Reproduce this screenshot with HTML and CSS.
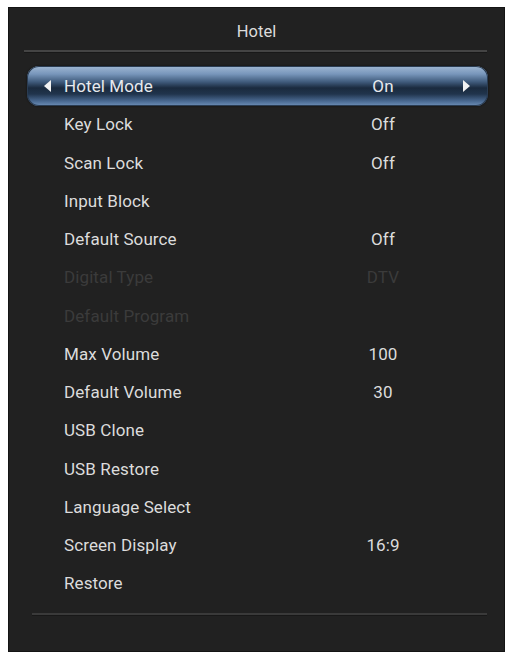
FILE: index.html
```html
<!DOCTYPE html>
<html lang="en">
<head>
  <meta charset="UTF-8">
  <meta name="viewport" content="width=device-width, initial-scale=1.0">
  <title>Hotel</title>
  <link rel="stylesheet" href="styles.css">
</head>
<body>
  <div class="panel">
    <div class="header">
      <div class="title">Hotel</div>
    </div>

    <div class="menu">
      <div class="menu-row selected">
        <span class="arrow arrow-left"></span>
        <span class="label">Hotel Mode</span>
        <span class="value">On</span>
        <span class="arrow arrow-right"></span>
      </div>
      <div class="menu-row">
        <span class="arrow"></span>
        <span class="label">Key Lock</span>
        <span class="value">Off</span>
      </div>
      <div class="menu-row">
        <span class="arrow"></span>
        <span class="label">Scan Lock</span>
        <span class="value">Off</span>
      </div>
      <div class="menu-row">
        <span class="arrow"></span>
        <span class="label">Input Block</span>
        <span class="value"></span>
      </div>
      <div class="menu-row">
        <span class="arrow"></span>
        <span class="label">Default Source</span>
        <span class="value">Off</span>
      </div>
      <div class="menu-row disabled">
        <span class="arrow"></span>
        <span class="label">Digital Type</span>
        <span class="value">DTV</span>
      </div>
      <div class="menu-row disabled">
        <span class="arrow"></span>
        <span class="label">Default Program</span>
        <span class="value"></span>
      </div>
      <div class="menu-row">
        <span class="arrow"></span>
        <span class="label">Max Volume</span>
        <span class="value">100</span>
      </div>
      <div class="menu-row">
        <span class="arrow"></span>
        <span class="label">Default Volume</span>
        <span class="value">30</span>
      </div>
      <div class="menu-row">
        <span class="arrow"></span>
        <span class="label">USB Clone</span>
        <span class="value"></span>
      </div>
      <div class="menu-row">
        <span class="arrow"></span>
        <span class="label">USB Restore</span>
        <span class="value"></span>
      </div>
      <div class="menu-row">
        <span class="arrow"></span>
        <span class="label">Language Select</span>
        <span class="value"></span>
      </div>
      <div class="menu-row">
        <span class="arrow"></span>
        <span class="label">Screen Display</span>
        <span class="value">16:9</span>
      </div>
      <div class="menu-row">
        <span class="arrow"></span>
        <span class="label">Restore</span>
        <span class="value"></span>
      </div>
    </div>

    <div class="footer-line"></div>
  </div>
</body>
</html>
```

FILE: styles.css
```css
* {
  margin: 0;
  padding: 0;
  box-sizing: border-box;
}

body {
  background: #fff;
  font-family: Roboto, 'Liberation Sans', sans-serif;
  color: #dcdcdc;
}

.panel {
  width: 497px;
  height: 645px;
  margin: 7px 0 0 8px;
  background: #212121;
  border: 1px solid #141414;
  display: flex;
  flex-direction: column;
}

.header {
  height: 44px;
  margin: 0 17px 0 15px;
  display: flex;
  align-items: center;
  justify-content: center;
  border-bottom: 2px solid #444;
  box-shadow: 0 1px 0 #181818;
}

.title {
  font-size: 16.5px;
  padding-top: 5px;
  padding-left: 2px;
}

.menu {
  margin: 15px 16px 0 18px;
}

.menu-row {
  height: 38.25px;
  display: grid;
  grid-template-columns: 20px 279px 80px 47px;
  align-items: center;
  padding: 0 18px 0 17px;
  font-size: 17px;
  letter-spacing: 0.1px;
}

.menu-row.selected {
  height: 40px;
  margin: -1px 0 -0.75px;
  border-radius: 12px;
  background: linear-gradient(to bottom,
    #a0b8d3 0%,
    #7896bb 20%,
    #3f5a7b 40%,
    #1a2a3e 55%,
    #20344c 70%,
    #4a6a92 88%,
    #6e8fb8 100%);
  box-shadow: inset 0 0 0 1px #2a3c52, 0 0 2px #0c0c0c;
  color: #e6e9ee;
}

.menu-row.disabled {
  color: #3b3b3b;
}

.value {
  text-align: center;
}

.arrow-left {
  width: 0;
  height: 0;
  border-top: 6.5px solid transparent;
  border-bottom: 6.5px solid transparent;
  border-right: 7px solid #f2f2f2;
}

.arrow-right {
  width: 0;
  height: 0;
  justify-self: end;
  border-top: 6.5px solid transparent;
  border-bottom: 6.5px solid transparent;
  border-left: 7px solid #f2f2f2;
}

.footer-line {
  margin: 10px 17px 0 23px;
  border-top: 2px solid #3a3a3a;
  box-shadow: 0 1px 0 #181818;
}
```
